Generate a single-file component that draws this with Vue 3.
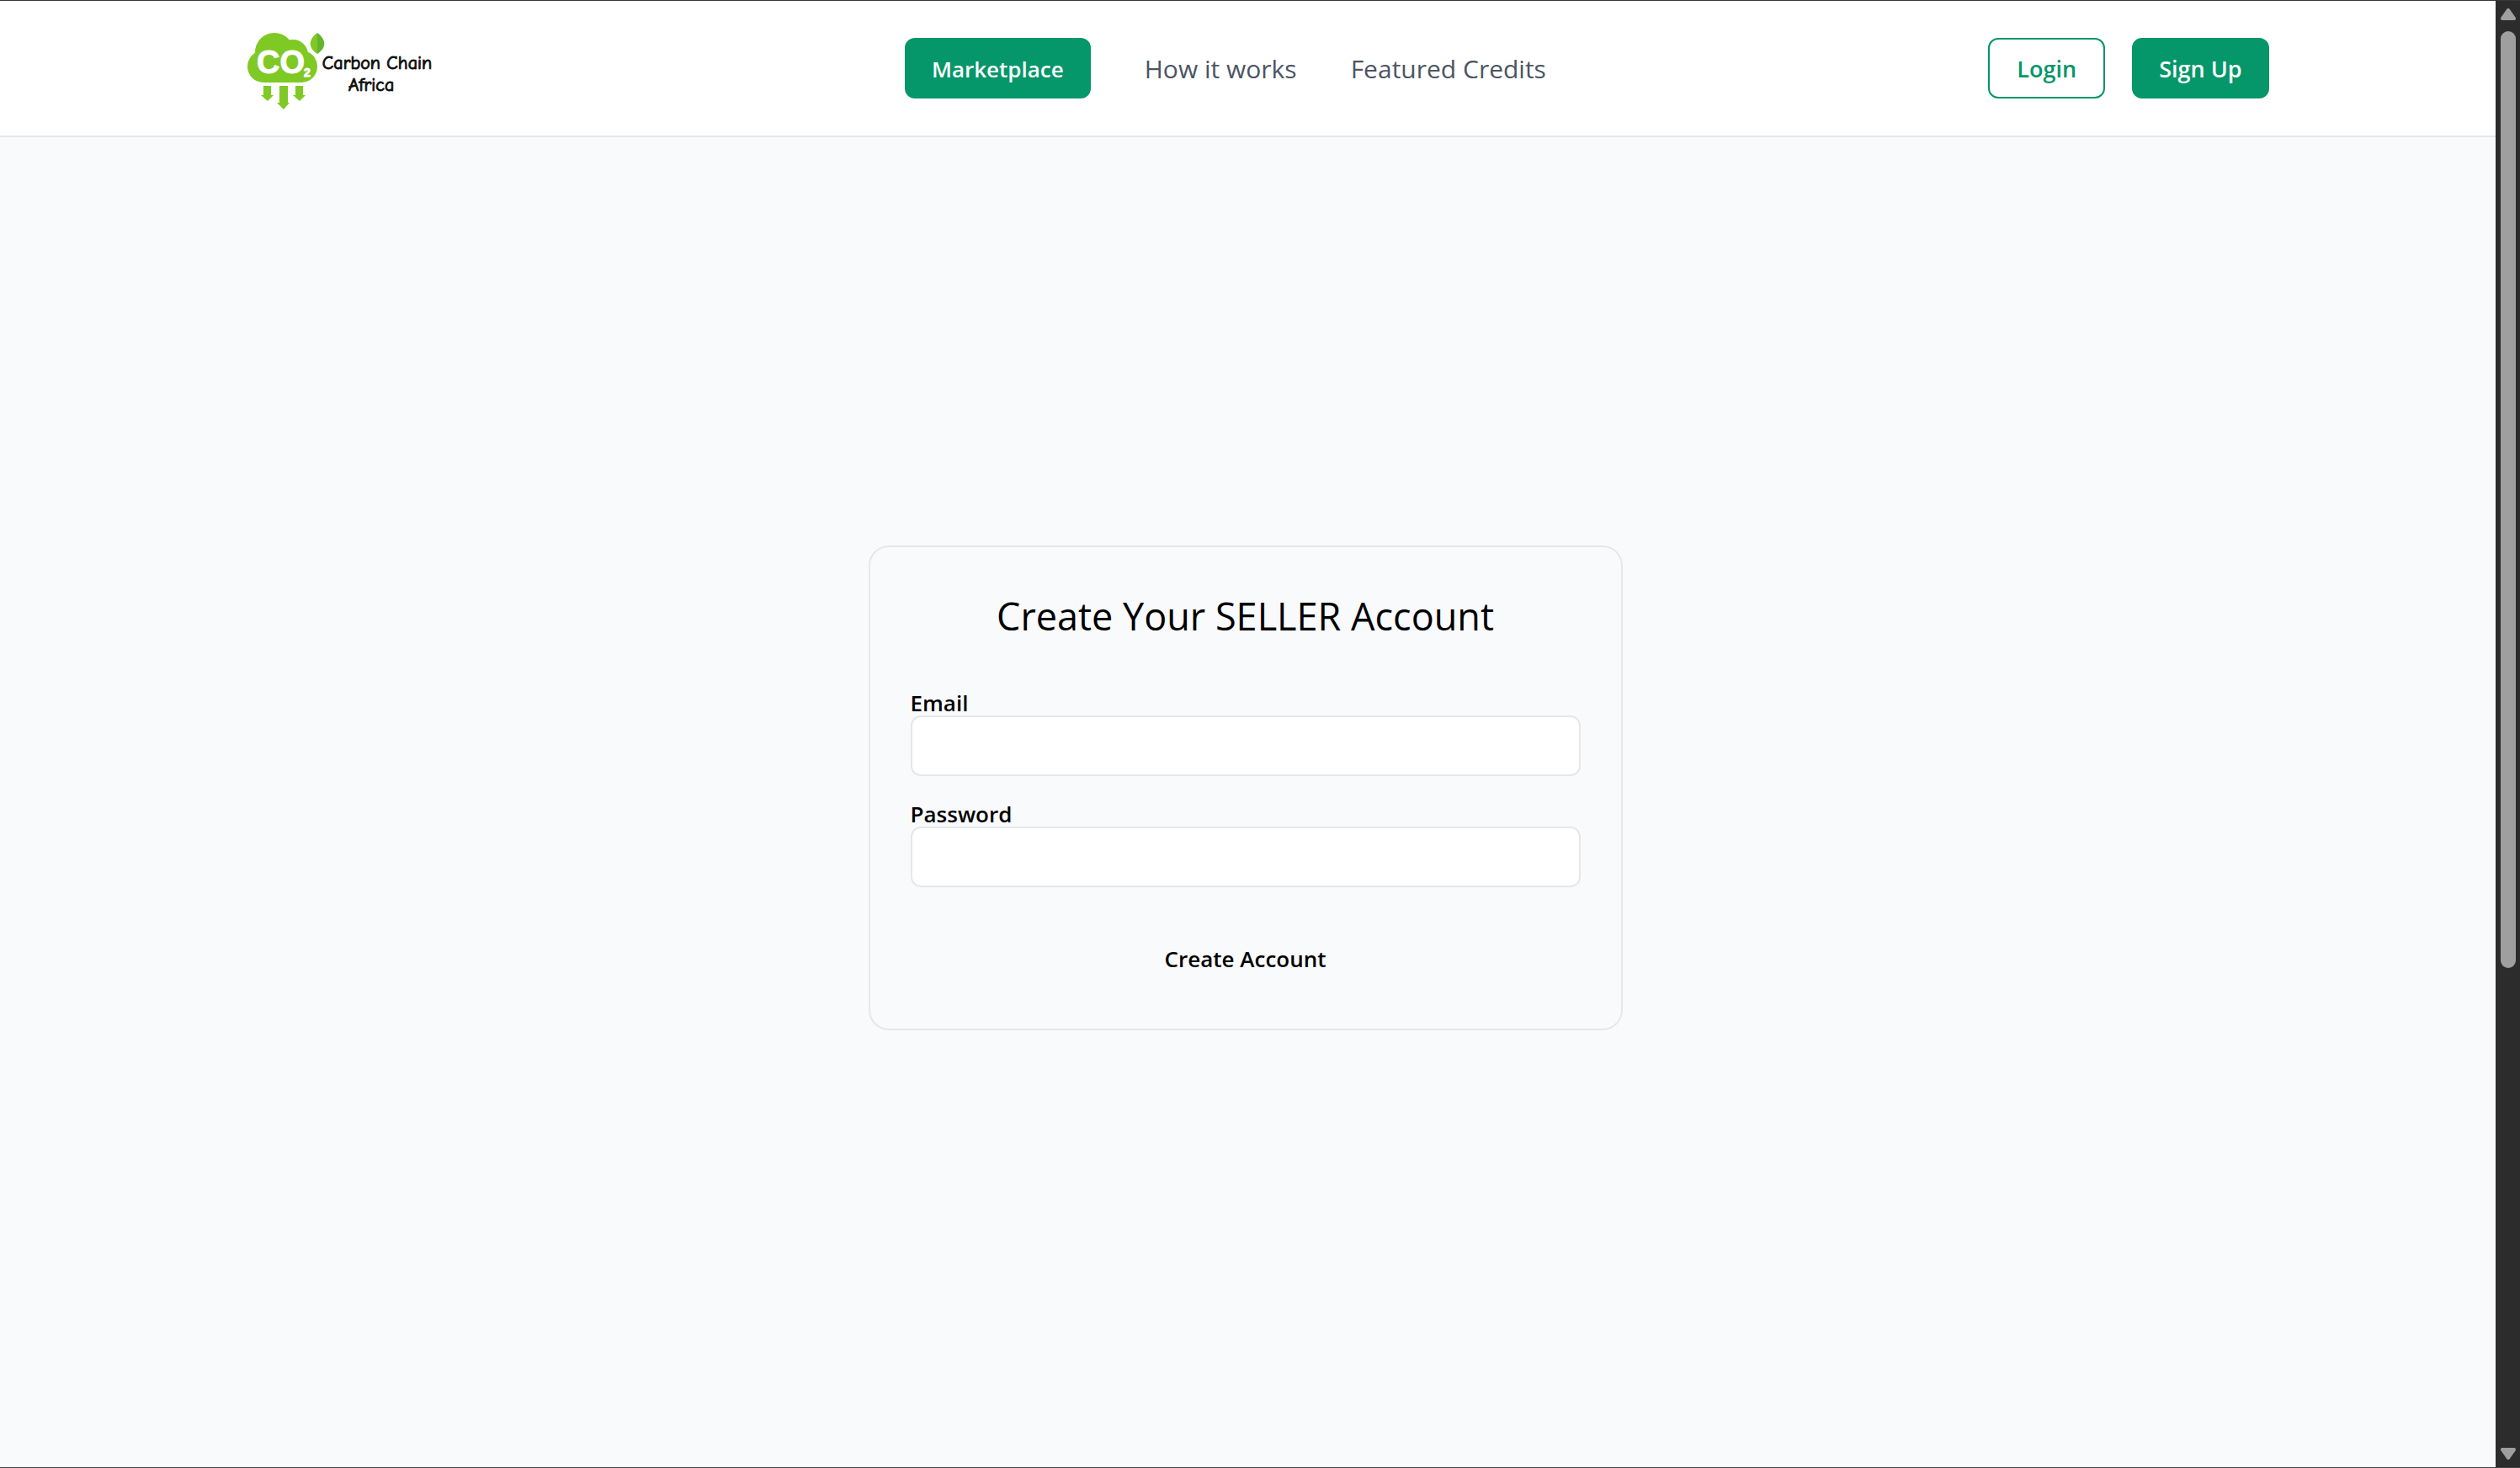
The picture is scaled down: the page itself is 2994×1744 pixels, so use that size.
<script setup>
import { ref } from 'vue'

const links = [
  { label: 'How it works', href: '#how-it-works' },
  { label: 'Featured Credits', href: '#featured-credits' },
]
const email = ref('')
const password = ref('')
</script>

<template>
  <div class="window">
    <div class="page">
      <header class="header">
        <div class="bar">
          <a class="logo" href="#home" aria-label="Carbon Chain Africa">
            <svg viewBox="264 25 286 112" role="img" aria-hidden="true">
              <g fill="#7fc924">
                <circle cx="313" cy="79" r="19" />
                <circle cx="326" cy="62" r="23" />
                <circle cx="348" cy="65" r="18" />
                <circle cx="358" cy="79" r="19" />
                <rect x="313" y="64" width="45" height="34" />
                <path d="M313 102h9v11h3l-7 7-8-7h3z" />
                <path d="M332 102h10v20h2l-7 8-8-8h3z" />
                <path d="M351 102h9v11h3l-7 7-8-7h3z" />
              </g>
              <path d="M377 39c-11 8-11 18 0 25 11-7 11-17 0-25z" fill="#7fc924" stroke="#fff" stroke-width="4" />
              <path d="M377 39c-11 8-11 18 0 25z" fill="#7fc924" />
              <path d="M377 39c11 8 11 18 0 25z" fill="#63b52f" />
              <text class="co" x="305" y="87">CO</text>
              <text class="sub" x="361" y="91">2</text>
              <text class="name" x="448" y="82">Carbon Chain</text>
              <text class="name" x="441" y="108">Africa</text>
            </svg>
          </a>
          <nav class="nav">
            <a class="btn solid" href="#marketplace">Marketplace</a>
            <a v-for="l in links" :key="l.href" class="link" :href="l.href">{{ l.label }}</a>
          </nav>
          <div class="actions">
            <button class="btn outline" type="button">Login</button>
            <button class="btn solid" type="button">Sign Up</button>
          </div>
        </div>
      </header>

      <main class="main">
        <form class="card" @submit.prevent>
          <h1 class="title">Create Your SELLER Account</h1>
          <div class="field">
            <label for="email">Email</label>
            <input id="email" v-model="email" type="email" />
          </div>
          <div class="field">
            <label for="password">Password</label>
            <input id="password" v-model="password" type="password" />
          </div>
          <button class="submit" type="submit">Create Account</button>
        </form>
      </main>
    </div>

    <div class="scrollbar" aria-hidden="true">
      <svg class="arrow" viewBox="0 0 18 14"><path d="M9 2 16 12H2z" /></svg>
      <div class="track"><div class="thumb"></div></div>
      <svg class="arrow" viewBox="0 0 18 14"><path d="M9 12 2 2h14z" /></svg>
    </div>
  </div>
</template>

<style>
body {
  margin: 0;
  background: #f9fafc;
}
</style>

<style scoped>
.window {
  display: flex;
  box-sizing: border-box;
  min-height: 100vh;
  border-top: 1px solid #38383c;
  border-bottom: 1px solid #454547;
  font-family: "Segoe UI", "Open Sans", "Noto Sans", sans-serif;
  color: #000;
}
.page {
  flex: 1;
  display: flex;
  flex-direction: column;
}
.header {
  padding-right: 6px;
  background: #fff;
  border-bottom: 2px solid #e5e7eb;
}
.bar {
  display: flex;
  align-items: center;
  justify-content: space-between;
  box-sizing: border-box;
  max-width: 2560px;
  height: 160px;
  margin: 0 auto;
  padding: 0 64px;
}
.logo svg {
  display: block;
  width: 286px;
  height: 112px;
}
.co,
.sub {
  font-family: "Liberation Sans", sans-serif;
  font-weight: 700;
  fill: #fff;
  stroke: #fff;
  stroke-width: 1px;
}
.co {
  font-size: 38px;
}
.sub {
  font-size: 14px;
}
.name {
  font-family: "Comic Sans MS", "Comic Neue", "Open Sans", sans-serif;
  font-size: 22px;
  text-anchor: middle;
  fill: #111;
  stroke: #111;
  stroke-width: 1px;
}
.nav {
  display: flex;
  align-items: center;
  gap: 64px;
}
.actions {
  display: flex;
  gap: 32px;
}
.btn {
  box-sizing: border-box;
  height: 72px;
  padding: 2px 32px 0;
  border: 0;
  border-radius: 12px;
  font: inherit;
  font-size: 26px;
  font-weight: 600;
  line-height: 70px;
  text-decoration: none;
}
.actions .btn {
  font-size: 27px;
}
.solid {
  background: #059669;
  color: #fff;
}
.outline {
  border: 2px solid #059669;
  background: #fff;
  color: #059669;
  line-height: 66px;
}
.link {
  padding-top: 2px;
  font-size: 30px;
  line-height: 48px;
  color: #4b5563;
  text-decoration: none;
}
.main {
  flex: 1;
  display: flex;
  align-items: center;
  justify-content: center;
  padding: 0 6px 34px 0;
}
.card {
  display: flex;
  flex-direction: column;
  box-sizing: border-box;
  width: 100%;
  max-width: 896px;
  padding: 48px;
  border: 2px solid #e5e7eb;
  border-radius: 24px;
}
.title {
  margin: 0 0 54px;
  font-size: 45px;
  font-weight: 400;
  line-height: 68px;
  text-align: center;
}
.field {
  display: flex;
  flex-direction: column;
  margin-bottom: 30px;
}
.field label {
  font-size: 26px;
  font-weight: 600;
  line-height: 30px;
}
.field input {
  box-sizing: border-box;
  height: 72px;
  padding: 0 24px;
  border: 2px solid #e5e7eb;
  border-radius: 12px;
  background: #fff;
  font: inherit;
  font-size: 26px;
}
.submit {
  height: 72px;
  margin-top: 18px;
  padding: 2px 0 0;
  border: 0;
  background: none;
  font: inherit;
  font-size: 26px;
  font-weight: 600;
  color: #000;
}
.scrollbar {
  display: flex;
  flex-direction: column;
  align-items: center;
  box-sizing: border-box;
  width: 29px;
  padding: 9px 0;
  background: #2c2c2c;
}
.arrow {
  width: 18px;
  height: 14px;
  fill: #9f9f9f;
  stroke: #9f9f9f;
  stroke-width: 4px;
  stroke-linejoin: round;
}
.track {
  flex: 1;
  padding: 13px 0;
}
.thumb {
  width: 18px;
  height: calc(200% / 3);
  border-radius: 9px;
  background: #9f9f9f;
}
</style>
